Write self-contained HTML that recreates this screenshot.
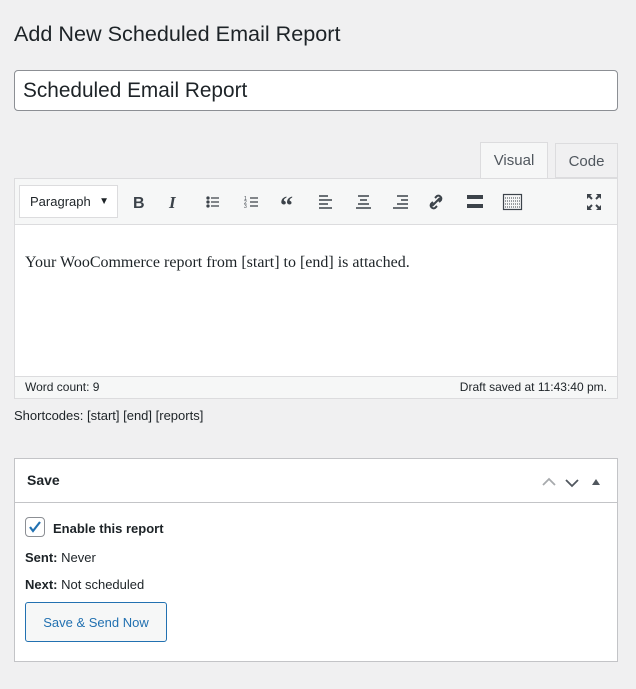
<!DOCTYPE html>
<html><head><style>
*{box-sizing:border-box;margin:0;padding:0}
body{width:636px;height:689px;background:#f0f0f1;font-family:"Liberation Sans",sans-serif;color:#1d2327;position:relative;overflow:hidden}
.abs{position:absolute}
h1{position:absolute;left:14px;top:21px;font-size:21.6px;font-weight:400;color:#1d2327}
.title{left:14px;top:70px;width:604px;height:41px;background:#fff;border:1px solid #8c8f94;border-radius:4px;font-size:20.8px;padding:8px 8px;line-height:24px}
.tab{top:142px;height:37px;font-size:15px;color:#50575e;text-align:center;line-height:36px;border:1px solid #dcdcde;border-bottom:none}
.editor{left:14px;top:178px;width:604px;height:221px;border:1px solid #dcdcde;background:#fff}
.tb{position:absolute;left:0;top:0;width:602px;height:46px;background:#f6f7f7;border-bottom:1px solid #dcdcde}
.sel{position:absolute;left:4px;top:6px;width:99px;height:33px;background:#fff;border:1px solid #dcdcde;font-size:13px;line-height:31px;padding-left:10px;color:#1d2327}
.content{position:absolute;left:10px;top:75px;font-family:"Liberation Serif",serif;font-size:16px;color:#1d2327}
.status{position:absolute;left:0;bottom:0;width:602px;height:22px;background:#f6f7f7;border-top:1px solid #dcdcde;font-size:12px;line-height:20px;padding:0 10px;color:#1d2327}
.box{left:14px;top:458px;width:604px;height:204px;background:#fff;border:1px solid #c3c4c7}
.bh{height:44px;border-bottom:1px solid #c3c4c7;font-size:14px;font-weight:700;line-height:43px;padding-left:12px}
.t13{font-size:13px}
</style></head><body>
<h1>Add New Scheduled Email Report</h1>
<div class="abs title">Scheduled Email Report</div>
<div class="abs tab" style="left:480px;width:68px;background:#f6f7f7;height:37px;color:#50575e">Visual</div>
<div class="abs tab" style="left:555px;width:63px;background:#f0f0f1;top:143px;height:35px;border-bottom:1px solid #dcdcde">Code</div>
<div class="abs editor">
 <div class="tb">
  <div class="sel">Paragraph<span style="position:absolute;right:8px;font-size:10px">▼</span></div>
  <svg class="abs" style="left:0;top:0" width="602" height="46" fill="#3c434a" stroke="#3c434a">
   <text x="118" y="29" font-family="Liberation Sans" font-weight="700" font-size="16" stroke="none">B</text>
   <text x="154" y="29" font-family="Liberation Serif" font-style="italic" font-weight="700" font-size="17" stroke="none">I</text>
   <g stroke-width="1.3"><circle cx="193" cy="19" r="1" /><circle cx="193" cy="23" r="1"/><circle cx="193" cy="27" r="1"/><path d="M196 19h8M196 23h8M196 27h8"/></g>
   <g stroke-width="1.3"><path d="M235 19h8M235 23h8M235 27h8"/><text x="229" y="21" font-size="5" stroke="none">1</text><text x="229" y="25" font-size="5" stroke="none">2</text><text x="229" y="29" font-size="5" stroke="none">3</text></g>
   <text x="265" y="35" font-family="Liberation Serif" font-weight="700" font-size="26" stroke="none">“</text>
   <g stroke-width="1.6"><path d="M304 17h9M304 21h13M304 25h9M304 29h13"/><path d="M343 17h11M345 21h7M343 25h11M341 29h15"/><path d="M382 17h11M386 21h7M382 25h11M378 29h15"/></g>
   <path d="M417 27l8-8M418 23l-2 2a3 3 0 0 0 4 4l2-2M424 23l2-2a3 3 0 0 0-4-4l-2 2" fill="none" stroke-width="2"/>
   <rect x="452" y="16" width="16" height="4" stroke="none"/><rect x="452" y="25" width="16" height="4" stroke="none"/>
   <rect x="488.5" y="15.5" width="18" height="15" fill="none" stroke-width="1.2"/><path d="M490 19h15M490 22h15M490 25h15M490 28h15" stroke-width="1" stroke-dasharray="1 1"/>
   <path d="M574 17l3 3M584 17l-3 3M574 29l3-3M584 29l-3-3" stroke-width="2"/><path d="M572 15h5l-5 5zM586 15v5l-5-5zM572 31v-5l5 5zM586 31h-5l5-5z" stroke="none"/>
  </svg>
 </div>
 <div class="content">Your WooCommerce report from [start] to [end] is attached.</div>
 <div class="status">Word count: 9<span style="float:right">Draft saved at 11:43:40 pm.</span></div>
</div>
<div class="abs t13" style="left:14px;top:408px">Shortcodes: [start] [end] [reports]</div>
<div class="abs box">
 <div class="bh">Save
  <svg class="abs" style="right:8px;top:15px" width="70" height="16" fill="none" stroke-width="1.8"><path d="M4 11l6-6 6 6" stroke="#a7aaad"/><path d="M27 6l6 6 6-6" stroke="#50575e"/><path d="M53 11l4-6 4 6z" fill="#50575e" stroke="none"/></svg>
 </div>
 <div class="abs" style="left:10px;top:58px;width:20px;height:20px;border:1px solid #8c8f94;border-radius:4px;background:#fff">
  <svg width="18" height="18" style="position:absolute;left:0;top:0"><path d="M4 9l3 4 7-9" stroke="#2271b1" stroke-width="2.2" fill="none"/></svg></div>
 <div class="abs t13" style="left:38px;top:62px;font-weight:700">Enable this report</div>
 <div class="abs t13" style="left:10px;top:91px"><b>Sent:</b> Never</div>
 <div class="abs t13" style="left:10px;top:118px"><b>Next:</b> Not scheduled</div>
 <div class="abs" style="left:10px;top:143px;width:142px;height:40px;border:1px solid #2271b1;border-radius:3px;background:#f6f7f7;color:#2271b1;font-size:13px;text-align:center;line-height:40px">Save &amp; Send Now</div>
</div>
</body></html>
